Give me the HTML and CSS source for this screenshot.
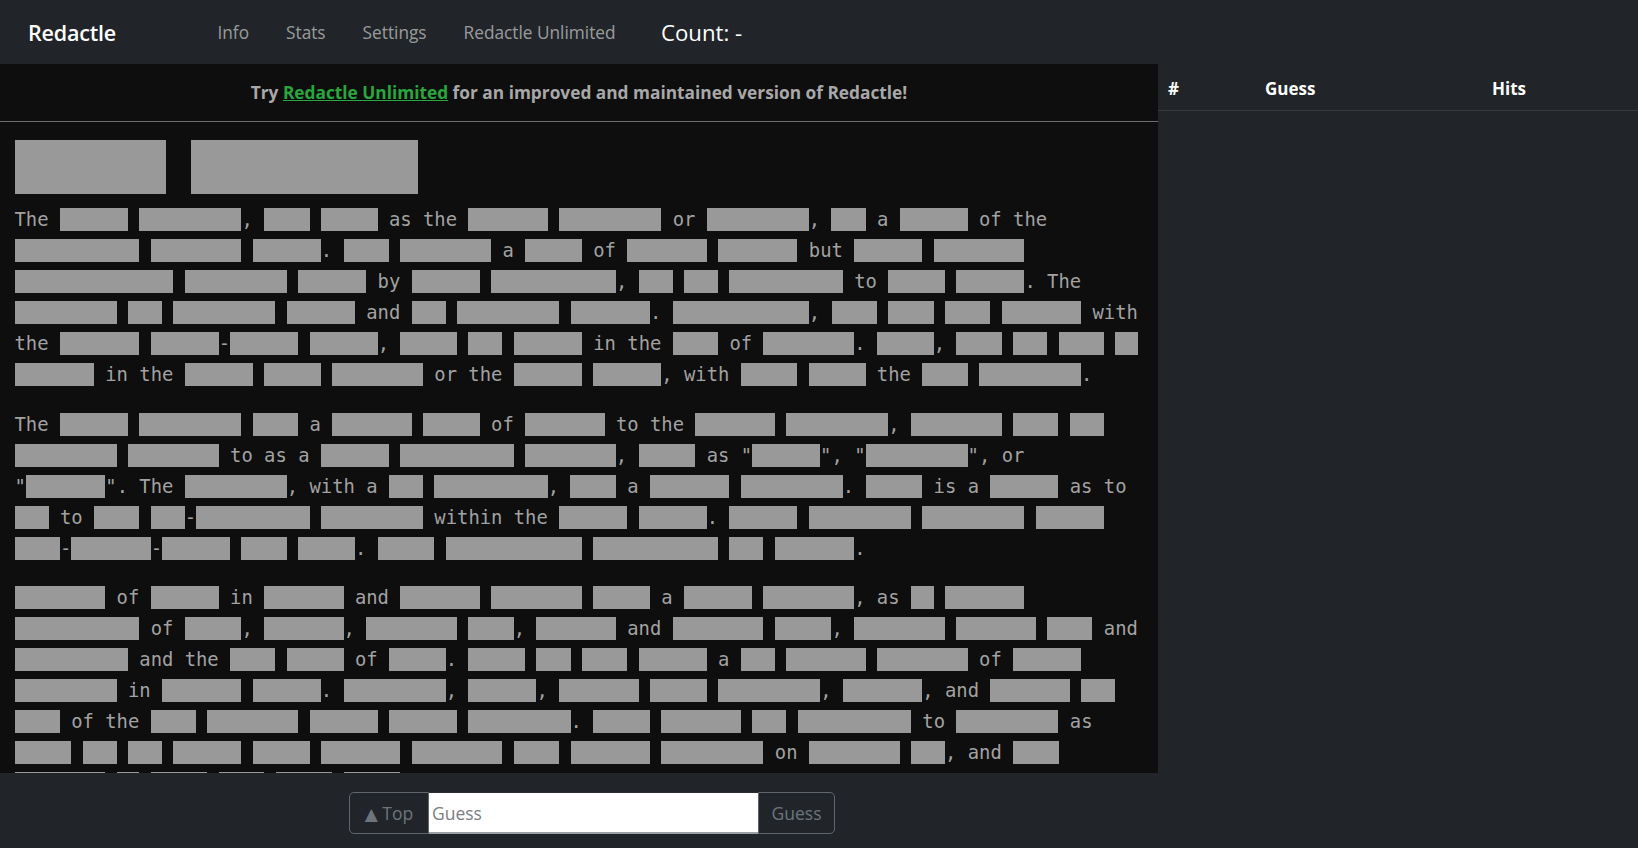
FILE: index.html
```html
<!DOCTYPE html>
<html lang="en">
<head>
<meta charset="utf-8">
<title>Redactle</title>
<link rel="stylesheet" href="styles.css">
</head>
<body>
<nav class="navbar">
  <a class="brand" href="#">Redactle</a>
  <ul class="nav-links">
    <li><a href="#">Info</a></li>
    <li><a href="#">Stats</a></li>
    <li><a href="#">Settings</a></li>
    <li><a href="#">Redactle Unlimited</a></li>
  </ul>
  <span class="count">Count: -</span>
</nav>
<div class="main">
  <div class="left">
    <div class="article">
      <div class="banner">Try&nbsp;<a href="#" class="green">Redactle Unlimited</a>&nbsp;for an improved and maintained version of Redactle!</div>
      <div class="content">
        <h1 class="title"><b>xxxxxx</b> <b>xxxxxxxxx</b></h1>
        <p>The <b>xxxxxx</b> <b>xxxxxxxxx</b>, <b>xxxx</b> <b>xxxxx</b> as the <b>xxxxxxx</b> <b>xxxxxxxxx</b> or <b>xxxxxxxxx</b>, <b>xxx</b> a <b>xxxxxx</b> of the<br><b>xxxxxxxxxxx</b> <b>xxxxxxxx</b> <b>xxxxxx</b>. <b>xxxx</b> <b>xxxxxxxx</b> a <b>xxxxx</b> of <b>xxxxxxx</b> <b>xxxxxxx</b> but <b>xxxxxx</b> <b>xxxxxxxx</b><br><b>xxxxxxxxxxxxxx</b> <b>xxxxxxxxx</b> <b>xxxxxx</b> by <b>xxxxxx</b> <b>xxxxxxxxxxx</b>, <b>xxx</b> <b>xxx</b> <b>xxxxxxxxxx</b> to <b>xxxxx</b> <b>xxxxxx</b>. The<br><b>xxxxxxxxx</b> <b>xxx</b> <b>xxxxxxxxx</b> <b>xxxxxx</b> and <b>xxx</b> <b>xxxxxxxxx</b> <b>xxxxxxx</b>. <b>xxxxxxxxxxxx</b>, <b>xxxx</b> <b>xxxx</b> <b>xxxx</b> <b>xxxxxxx</b> with<br>the <b>xxxxxxx</b> <b>xxxxxx</b>-<b>xxxxxx</b> <b>xxxxxx</b>, <b>xxxxx</b> <b>xxx</b> <b>xxxxxx</b> in the <b>xxxx</b> of <b>xxxxxxxx</b>. <b>xxxxx</b>, <b>xxxx</b> <b>xxx</b> <b>xxxx</b> <b>xx</b><br><b>xxxxxxx</b> in the <b>xxxxxx</b> <b>xxxxx</b> <b>xxxxxxxx</b> or the <b>xxxxxx</b> <b>xxxxxx</b>, with <b>xxxxx</b> <b>xxxxx</b> the <b>xxxx</b> <b>xxxxxxxxx</b>.</p>
        <p>The <b>xxxxxx</b> <b>xxxxxxxxx</b> <b>xxxx</b> a <b>xxxxxxx</b> <b>xxxxx</b> of <b>xxxxxxx</b> to the <b>xxxxxxx</b> <b>xxxxxxxxx</b>, <b>xxxxxxxx</b> <b>xxxx</b> <b>xxx</b><br><b>xxxxxxxxx</b> <b>xxxxxxxx</b> to as a <b>xxxxxx</b> <b>xxxxxxxxxx</b> <b>xxxxxxxx</b>, <b>xxxxx</b> as "<b>xxxxxx</b>", "<b>xxxxxxxxx</b>", or<br>"<b>xxxxxxx</b>". The <b>xxxxxxxxx</b>, with a <b>xxx</b> <b>xxxxxxxxxx</b>, <b>xxxx</b> a <b>xxxxxxx</b> <b>xxxxxxxxx</b>. <b>xxxxx</b> is a <b>xxxxxx</b> as to<br><b>xxx</b> to <b>xxxx</b> <b>xxx</b>-<b>xxxxxxxxxx</b> <b>xxxxxxxxx</b> within the <b>xxxxxx</b> <b>xxxxxx</b>. <b>xxxxxx</b> <b>xxxxxxxxx</b> <b>xxxxxxxxx</b> <b>xxxxxx</b><br><b>xxxx</b>-<b>xxxxxxx</b>-<b>xxxxxx</b> <b>xxxx</b> <b>xxxxx</b>. <b>xxxxx</b> <b>xxxxxxxxxxxx</b> <b>xxxxxxxxxxx</b> <b>xxx</b> <b>xxxxxxx</b>.</p>
        <p><b>xxxxxxxx</b> of <b>xxxxxx</b> in <b>xxxxxxx</b> and <b>xxxxxxx</b> <b>xxxxxxxx</b> <b>xxxxx</b> a <b>xxxxxx</b> <b>xxxxxxxx</b>, as <b>xx</b> <b>xxxxxxx</b><br><b>xxxxxxxxxxx</b> of <b>xxxxx</b>, <b>xxxxxxx</b>, <b>xxxxxxxx</b> <b>xxxx</b>, <b>xxxxxxx</b> and <b>xxxxxxxx</b> <b>xxxxx</b>, <b>xxxxxxxx</b> <b>xxxxxxx</b> <b>xxxx</b> and<br><b>xxxxxxxxxx</b> and the <b>xxxx</b> <b>xxxxx</b> of <b>xxxxx</b>. <b>xxxxx</b> <b>xxx</b> <b>xxxx</b> <b>xxxxxx</b> a <b>xxx</b> <b>xxxxxxx</b> <b>xxxxxxxx</b> of <b>xxxxxx</b><br><b>xxxxxxxxx</b> in <b>xxxxxxx</b> <b>xxxxxx</b>. <b>xxxxxxxxx</b>, <b>xxxxxx</b>, <b>xxxxxxx</b> <b>xxxxx</b> <b>xxxxxxxxx</b>, <b>xxxxxxx</b>, and <b>xxxxxxx</b> <b>xxx</b><br><b>xxxx</b> of the <b>xxxx</b> <b>xxxxxxxx</b> <b>xxxxxx</b> <b>xxxxxx</b> <b>xxxxxxxxx</b>. <b>xxxxx</b> <b>xxxxxxx</b> <b>xxx</b> <b>xxxxxxxxxx</b> to <b>xxxxxxxxx</b> as<br><b>xxxxx</b> <b>xxx</b> <b>xxx</b> <b>xxxxxx</b> <b>xxxxx</b> <b>xxxxxxx</b> <b>xxxxxxxx</b> <b>xxxx</b> <b>xxxxxxx</b> <b>xxxxxxxxx</b> on <b>xxxxxxxx</b> <b>xxx</b>, and <b>xxxx</b><br><b>xxxxxxxx</b> <b>xx</b> <b>xxxxx</b> <b>xxxx</b> <b>xxxxx</b> <b>xxxxx</b> in a</p>
      </div>
    </div>
    <div class="footer">
      <div class="input-group">
        <button class="btn btn-top" type="button"><span class="tri">&#9650;</span> Top</button>
        <input class="guess-input" type="text" placeholder="Guess">
        <button class="btn btn-guess" type="button">Guess</button>
      </div>
    </div>
  </div>
  <div class="side">
    <div class="thead">
      <div class="th">#</div>
      <div class="th">Guess</div>
      <div class="th">Hits</div>
    </div>
  </div>
</div>
</body>
</html>
```
FILE: styles.css
```css
* { box-sizing: border-box; }
html, body { margin: 0; padding: 0; }
body {
  background: #212529;
  font-family: "Open Sans", "Noto Sans", sans-serif;
  width: 1638px;
  height: 848px;
  overflow: hidden;
}
a { text-decoration: none; }

.navbar {
  height: 64px;
  display: flex;
  align-items: center;
  padding-left: 28px;
  padding-top: 1px;
  background: #212529;
}
.brand {
  color: #fff;
  font-size: 21.5px;
  font-weight: 600;
  letter-spacing: -0.2px;
}
.nav-links {
  display: flex;
  list-style: none;
  margin: 0 0 0 83px;
  padding: 0;
}
.nav-links a {
  display: block;
  padding: 0 18.5px;
  font-size: 17.25px;
  color: rgba(255, 255, 255, 0.55);
}
.count {
  margin-left: 27px;
  font-size: 22.2px;
  color: #fff;
}

.main {
  display: flex;
  height: 784px;
}
.left {
  width: 1158px;
  display: flex;
  flex-direction: column;
}
.article {
  height: 709px;
  background: #0e0e0e;
  overflow: hidden;
}
.banner {
  height: 58px;
  display: flex;
  align-items: center;
  justify-content: center;
  border-bottom: 1px solid #6f6f6f;
  font-size: 17.3px;
  font-weight: 700;
  color: #a8a8a8;
}
.green {
  color: #2aa63f;
  text-decoration: underline;
}
.content {
  padding: 18px 14px 0 14.5px;
  font-family: "DejaVu Sans Mono", monospace;
  font-size: 18.85px;
  color: #a2a2a2;
}
.title {
  margin: 0 0 10px;
  font-size: 41.85px;
  font-weight: normal;
  line-height: 54px;
  height: 54px;
  white-space: nowrap;
}
.title b {
  display: inline-block;
  height: 54px;
  vertical-align: top;
  background: #999;
  color: #999;
  font-weight: normal;
}
.content p {
  margin: 0 0 18.6px;
  line-height: 31px;
  white-space: nowrap;
}
.content p b {
  font-weight: normal;
  background: #999;
  color: #999;
  padding: 1px 0;
}

.footer {
  flex: 1;
  background: #212529;
  padding: 19px 0 0 349px;
}
.input-group {
  display: flex;
  height: 42px;
}
.btn {
  background: transparent;
  border: 1px solid #5f666d;
  color: #6c757d;
  font-family: "Open Sans", "Noto Sans", sans-serif;
  font-size: 17.5px;
  padding: 0;
  height: 42px;
}
.btn-top {
  width: 80px;
  border-radius: 5px 0 0 5px;
}
.tri {
  font-family: "DejaVu Sans", sans-serif;
  font-size: 17px;
}
.guess-input {
  width: 329px;
  height: 42px;
  border: none;
  border-top: 1px solid #2a2e33;
  border-bottom: 2px solid #9aa0a6;
  background: #fff;
  padding: 0 3px;
  font-family: "Open Sans", "Noto Sans", sans-serif;
  font-size: 17.5px;
  color: #333;
  outline: none;
}
.guess-input::placeholder { color: #7b7f83; }
.btn-guess {
  width: 77px;
  border-radius: 0 5px 5px 0;
}

.side {
  flex: 1;
  background: #212529;
}
.thead {
  display: grid;
  grid-template-columns: 97px 227px 1fr;
  border-bottom: 1px solid #363a3f;
}
.th {
  padding: 13px 10px 9px;
  line-height: 24px;
  font-size: 17px;
  font-weight: 700;
  color: #fff;
}
```
